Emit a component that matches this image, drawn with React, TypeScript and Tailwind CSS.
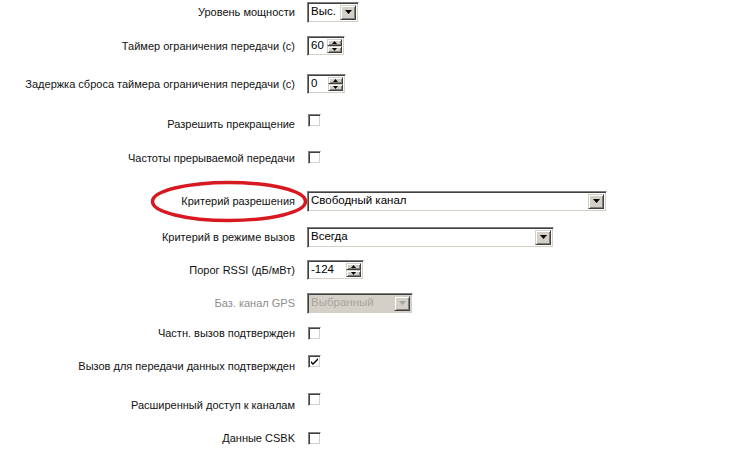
import React from "react";

const FIELD =
  "border border-t-[#808080] border-l-[#808080] border-r-white border-b-white shadow-[inset_1px_1px_#404040,inset_-1px_-1px_#d4d0c8]";
const BTN =
  "border border-t-[#d4d0c8] border-l-[#d4d0c8] border-r-[#404040] border-b-[#404040] shadow-[inset_1px_1px_white,inset_-1px_-1px_#808080] bg-[#d4d0c8] flex items-center justify-center";

function Select({ value, width, disabled }: { value: string; width: string; disabled?: boolean }) {
  return (
    <div className={`${FIELD} ${width} h-[21px] flex items-stretch p-[2px] ${disabled ? "bg-[#d4d0c8]" : "bg-white"}`}>
      <div className={`flex-1 flex items-center pl-[1px] text-[11.5px] ${disabled ? "text-[#a7a59f]" : "text-black"}`}>{value}</div>
      <div className={`${BTN} w-[16px]`}>
        <svg width="7" height="4" viewBox="0 0 7 4">
          <path d="M0 0h7L3.5 4z" fill={disabled ? "#a7a59f" : "#000"} />
        </svg>
      </div>
    </div>
  );
}

function Spinner({ value, width }: { value: string; width: string }) {
  return (
    <div className={`${FIELD} ${width} h-[20px] flex items-stretch bg-white p-[2px]`}>
      <div className="flex-1 flex items-center pl-[1px] text-[11.5px]">{value}</div>
      <div className="w-[15px] flex flex-col">
        <div className={`${BTN} flex-1`}>
          <svg width="5" height="3" viewBox="0 0 5 3">
            <path d="M2.5 0L5 3H0z" fill="#000" />
          </svg>
        </div>
        <div className={`${BTN} flex-1`}>
          <svg width="5" height="3" viewBox="0 0 5 3">
            <path d="M0 0h5L2.5 3z" fill="#000" />
          </svg>
        </div>
      </div>
    </div>
  );
}

function Check({ checked, up }: { checked?: boolean; up?: string }) {
  return (
    <div className={`${FIELD} w-[13px] h-[13px] bg-white ml-[1px] flex items-center justify-center ${up ?? ""}`}>
      {checked && (
        <svg width="7" height="7" viewBox="0 0 7 7">
          <path d="M0 3l2 2 5-5v2L2 7 0 5z" fill="#000" />
        </svg>
      )}
    </div>
  );
}

const ROWS: { label: string; mt: string; gray?: boolean; ctrl: React.ReactNode }[] = [
  { label: "Уровень мощности", mt: "mt-[1px]", ctrl: <Select value="Выс." width="w-[52px]" /> },
  { label: "Таймер ограничения передачи (с)", mt: "mt-[12px]", ctrl: <Spinner value="60" width="w-[38px]" /> },
  { label: "Задержка сброса таймера ограничения передачи (с)", mt: "mt-[16px]", ctrl: <Spinner value="0" width="w-[39px]" /> },
  { label: "Разрешить прекращение", mt: "mt-[18px]", ctrl: <Check up="mb-[8px]" /> },
  { label: "Частоты прерываемой передачи", mt: "mt-[12px]", ctrl: <Check up="mb-[2px]" /> },
  { label: "Критерий разрешения", mt: "mt-[21px]", ctrl: <Select value="Свободный канал" width="w-[300px]" /> },
  { label: "Критерий в режиме вызов", mt: "mt-[14px]", ctrl: <Select value="Всегда" width="w-[247px]" /> },
  { label: "Порог RSSI (дБ/мВт)", mt: "mt-[11px]", ctrl: <Spinner value="-124" width="w-[57px]" /> },
  { label: "Баз. канал GPS", mt: "mt-[11px]", gray: true, ctrl: <Select value="Выбранный" width="w-[106px]" disabled /> },
  { label: "Частн. вызов подтвержден", mt: "mt-[8px]", ctrl: <Check /> },
  { label: "Вызов для передачи данных подтвержден", mt: "mt-[11px]", ctrl: <Check checked up="mb-[10px]" /> },
  { label: "Расширенный доступ к каналам", mt: "mt-[17px]", ctrl: <Check up="mb-[12px]" /> },
  { label: "Данные CSBK", mt: "mt-[11px]", ctrl: <Check /> },
];

export default function App() {
  return (
    <div className="relative w-[741px] h-[456px] bg-white overflow-hidden text-[11px] text-black font-['Liberation_Sans',Arial,sans-serif]">
      <div className="flex flex-col">
        {ROWS.map((r) => (
          <div key={r.label} className={`flex items-center h-[22px] ${r.mt}`}>
            <div className={`w-[295px] text-right leading-[14px] ${r.gray ? "text-[#8c8c8c]" : "text-[#111]"}`}>{r.label}</div>
            <div className="ml-[12px] flex items-center h-full">{r.ctrl}</div>
          </div>
        ))}
      </div>

      {/* red highlight ellipse */}
      <svg className="absolute left-[150px] top-[180px] pointer-events-none" width="158" height="43" viewBox="0 0 158 43">
        <ellipse cx="79" cy="21.5" rx="76.5" ry="19" fill="none" stroke="#d81820" strokeWidth="3.5" />
      </svg>
    </div>
  );
}
